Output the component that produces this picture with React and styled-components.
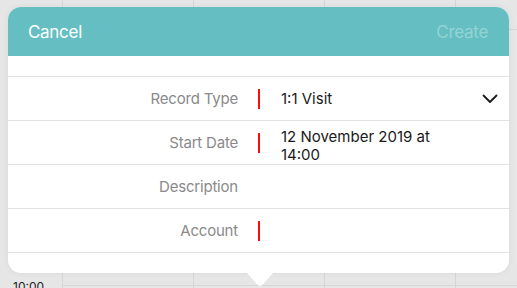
import React from "react";
import styled, { createGlobalStyle } from "styled-components";

const GlobalStyle = createGlobalStyle`
  * { box-sizing: border-box; }
  body {
    margin: 0;
    font-family: Inter, "Liberation Sans", sans-serif;
    background: #e6e6e6;
  }
`;

const Calendar = styled.div`
  position: relative;
  width: 517px;
  height: 288px;
  overflow: hidden;
  background-color: #e6e6e6;
  background-image:
    linear-gradient(#d6d6d6, #d6d6d6),
    linear-gradient(#d6d6d6, #d6d6d6),
    repeating-linear-gradient(
      90deg,
      transparent 0,
      transparent 62px,
      #d6d6d6 62px,
      #d6d6d6 63px,
      transparent 63px,
      transparent 131px
    );
  background-size: 100% 1px, 100% 1px, 100% 100%;
  background-position: 62px 29px, 62px 285px, 0 0;
  background-repeat: no-repeat;
`;

const TimeLabel = styled.div`
  position: absolute;
  left: 13px;
  top: ${(p) => p.top}px;
  font-size: 12px;
  color: #222;
`;

const Popover = styled.div`
  position: absolute;
  left: 8px;
  top: 7px;
  width: 501px;
  display: flex;
  flex-direction: column;
  background: #fff;
  border-radius: 13px;
  box-shadow: 0 0 6px rgba(0, 0, 0, 0.06);

  &::after {
    content: "";
    position: absolute;
    left: 238px;
    bottom: -13px;
    width: 28px;
    height: 14px;
    background: #fff;
    clip-path: polygon(0 0, 100% 0, 56% 96%, 50% 100%, 44% 96%);
  }
`;

const Header = styled.div`
  display: flex;
  align-items: center;
  justify-content: space-between;
  height: 49px;
  padding: 0 21px 0 20px;
  background: #65bfc2;
  border-radius: 13px 13px 0 0;
`;

const HeaderButton = styled.button`
  border: none;
  background: none;
  padding: 0;
  font-family: inherit;
  font-size: 17px;
  letter-spacing: -0.3px;
  color: ${(p) => (p.disabled ? "#94d3d5" : "#fff")};
`;

const Form = styled.div`
  display: flex;
  flex-direction: column;
  padding: 20px 0;
`;

const Row = styled.div`
  display: grid;
  grid-template-columns: 230px 43px 180px 1fr;
  align-items: center;
  height: 44px;
  border-top: 1px solid #e3e3e3;

  &:last-child {
    height: 45px;
    border-bottom: 1px solid #e3e3e3;
  }
`;

const Label = styled.div`
  text-align: right;
  font-size: 15px;
  letter-spacing: -0.2px;
  color: #8a8a8a;
`;

const Required = styled.span`
  justify-self: start;
  width: 2px;
  height: 20px;
  margin-left: 20px;
  background: ${(p) => (p.on ? "#ff0d0d" : "transparent")};
`;

const Value = styled.div`
  padding-top: ${(p) => (p.multi ? 6 : 0)}px;
  font-size: 15px;
  line-height: 18px;
  color: #1a1a1a;
`;

const Chevron = styled.div`
  justify-self: end;
  padding-right: 11px;
  display: flex;
  color: #1a1a1a;
`;

const fields = [
  { label: "Record Type", value: "1:1 Visit", required: true, select: true },
  { label: "Start Date", value: "12 November 2019 at 14:00", required: true, multi: true },
  { label: "Description", value: "" },
  { label: "Account", value: "", required: true },
];

const App = () => (
  <>
    <GlobalStyle />
    <Calendar>
      <TimeLabel top={279}>10:00</TimeLabel>
      <Popover>
        <Header>
          <HeaderButton>Cancel</HeaderButton>
          <HeaderButton disabled>Create</HeaderButton>
        </Header>
        <Form>
          {fields.map((f) => (
            <Row key={f.label}>
              <Label>{f.label}</Label>
              <Required on={f.required} />
              <Value multi={f.multi}>{f.value}</Value>
              {f.select ? (
                <Chevron>
                  <svg width="16" height="10" viewBox="0 0 16 10" fill="none">
                    <path
                      d="M1.5 1.5 L8 8 L14.5 1.5"
                      stroke="currentColor"
                      strokeWidth="1.8"
                      strokeLinecap="round"
                      strokeLinejoin="round"
                    />
                  </svg>
                </Chevron>
              ) : (
                <span />
              )}
            </Row>
          ))}
        </Form>
      </Popover>
    </Calendar>
  </>
);

export default App;
